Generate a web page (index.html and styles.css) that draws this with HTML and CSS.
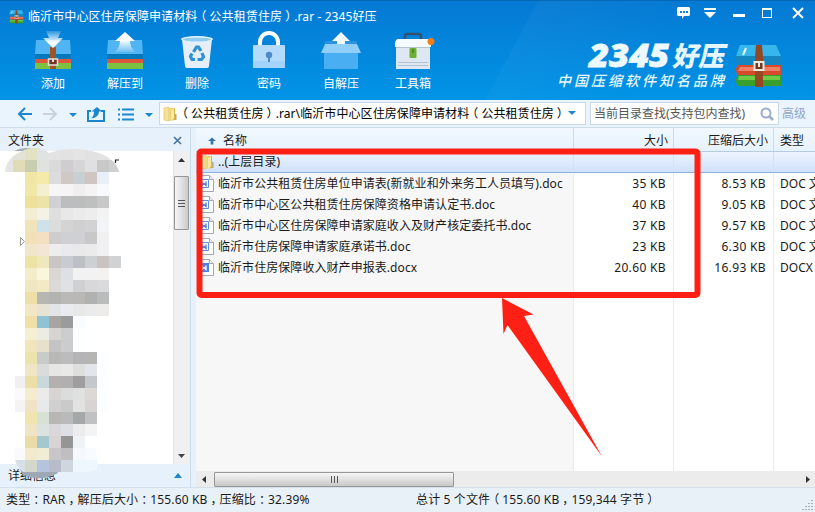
FILE: index.html
```html
<!DOCTYPE html>
<html lang="zh-CN">
<head>
    <meta charset="UTF-8">
    <meta name="viewport" content="width=device-width, initial-scale=1.0">
    <title>2345好压</title>
    <link rel="stylesheet" href="styles.css">
</head>
<body>
<div class="window">
    <header class="header">
        <div class="titlebar">
            <svg class="app-icon" width="15" height="14" viewBox="0 0 46 44">
                <use href="#archive"/>
            </svg>
            <span class="title">临沂市中心区住房保障申请材料<span class="open">（</span>公共租赁住房<span class="close">）</span>.rar - 2345好压</span>
            <svg class="controls" width="130" height="16" viewBox="0 0 130 16">
                <path d="M2 1h11l1 1v7l-1 1H8l-2 3v-3H2L1 9V2z" fill="#fff"/>
                <path d="M4 5h2v2H4zM7 5h2v2H7zM10 5h2v2h-2z" fill="#0f83d8"/>
                <path d="M28 2h12v2H28zM28 6h12l-6 6z" fill="#fff"/>
                <path d="M57 8h12v3H57z" fill="#fff"/>
                <path d="M86 2h10v10H86zM87 4v7h8V4z" fill="#fff" fill-rule="evenodd"/>
                <path d="M117 2l10 10M127 2l-10 10" stroke="#fff" stroke-width="2"/>
            </svg>
        </div>
        <div class="header-main">
            <nav class="tools">
                <div class="tool">
                    <svg width="44" height="42" viewBox="0 0 44 42">
                        <path d="M5 12h34l1 14H4z" fill="#51b4f3"/>
                        <path d="M4 26h36v6H4z" fill="#0878bd"/>
                        <path d="M4 31h36v4H4z" fill="#dc5639"/>
                        <path d="M4 35h36v6H4z" fill="#7dc143"/>
                        <path d="M19 19h6v22h-6z" fill="#9b5528"/>
                        <path d="M17.500 31h9v6h-9z" fill="#713725" stroke="#e9e2dc" stroke-width="1.500"/>
                        <path d="M21 31h2v3h-2z" fill="#e9e2dc"/>
                        <path d="M15 3h15l-3 7h5l-10 10-10-10h6z" fill="url(#arrowDown)"/>
                    </svg>
                    <span>添加</span>
                </div>
                <div class="tool">
                    <svg width="44" height="42" viewBox="0 0 44 42">
                        <path d="M5 12h34l1 14H4z" fill="#51b4f3"/>
                        <path d="M4 26h36v6H4z" fill="#0878bd"/>
                        <path d="M4 31h36v4H4z" fill="#dc5639"/>
                        <path d="M4 35h36v6H4z" fill="#7dc143"/>
                        <path d="M22 4l10 9h-5q0 6 5 11H12q5-5 5-11h-5z" fill="url(#arrowUp)"/>
                    </svg>
                    <span>解压到</span>
                </div>
                <div class="tool">
                    <svg width="44" height="42" viewBox="0 0 44 42">
                        <path d="M7 11h30l-3 27q0 2-3 2H13q-3 0-3-2z" fill="#e6eef7"/>
                        <ellipse cx="22" cy="11" rx="16" ry="3" fill="#eef8ff"/>
                        <ellipse cx="22" cy="11.500" rx="14" ry="2" fill="#8fcdf3"/>
                        <g fill="none" stroke="#2e91d6" stroke-width="3.200">
                            <path d="M18.500 24l3-5h2l2.500 4"/>
                            <path d="M27 25l1.500 4-2 2.500h-4"/>
                            <path d="M20 31.500h-3l-1.500-3 1.500-3"/>
                        </g>
                    </svg>
                    <span>删除</span>
                </div>
                <div class="tool">
                    <svg width="44" height="42" viewBox="0 0 44 42">
                        <path d="M13 18v-4a9 9 0 0 1 18 0v4" fill="none" stroke="#fff" stroke-width="4"/>
                        <rect x="6" y="17" width="32" height="23" rx="1" fill="#b4dbfc"/>
                        <path d="M6 33h32v7H6z" fill="#a3d2fa"/>
                        <circle cx="22" cy="27" r="3.200" fill="#4c8bcb"/>
                        <path d="M21 28h2v6h-2z" fill="#4c8bcb"/>
                    </svg>
                    <span>密码</span>
                </div>
                <div class="tool">
                    <svg width="44" height="42" viewBox="0 0 44 42">
                        <path d="M6 13h32v9H6z" fill="#2a93e0"/>
                        <path d="M22 4l9 9h-5v8h-8v-8h-5z" fill="#f2faff"/>
                        <path d="M6 16h32l4 9H2z" fill="#8fcffa"/>
                        <path d="M5 25h34v16H5z" fill="#4aaef2"/>
                    </svg>
                    <span>自解压</span>
                </div>
                <div class="tool">
                    <svg width="44" height="42" viewBox="0 0 44 42">
                        <path d="M14 12V8q0-2 2-2h12q2 0 2 2v4" fill="none" stroke="#34516f" stroke-width="2.500"/>
                        <path d="M7 11h30q2 0 3 4v4H4v-4q1-4 3-4z" fill="#f8fbfe"/>
                        <path d="M5 19h34v22H5z" fill="#dfe8f2"/>
                        <path d="M5 19.500h34M7 34.500h30M7 37.500h30" stroke="#b4c3d2"/>
                        <rect x="18.500" y="20" width="7" height="10" rx="1" fill="#6eb132"/>
                        <path d="M22 21v4" stroke="#2e6817"/>
                        <circle cx="40" cy="13.500" r="3.500" fill="#f57e12"/>
                    </svg>
                    <span>工具箱</span>
                </div>
            </nav>
            <div class="brand">
                <svg class="brand-text" width="176" height="60" viewBox="0 0 176 60">
                    <text class="brand-name" x="37" y="37" textLength="80" lengthAdjust="spacingAndGlyphs">2345</text>
                    <text class="brand-cn" transform="translate(120 36) skewX(-12)" textLength="52" lengthAdjust="spacingAndGlyphs">好压</text>
                    <text class="brand-slogan" x="5" y="56" textLength="167">中国压缩软件知名品牌</text>
                </svg>
                <svg class="brand-icon" width="46" height="44" viewBox="0 0 46 44">
                    <g id="archive">
                        <path d="M4 1h36l5 11v8l-2 1H2l-2-3v-6z" fill="#1686c0"/>
                        <path d="M4 1h36l5 11H0z" fill="#35b7ed"/>
                        <path d="M2 21h43v10H2q-4-5 0-10z" fill="#d84a2c"/>
                        <path d="M4 23h40v4H2z" fill="#f08065"/>
                        <path d="M2 31h43v11H2q-4-5 0-11z" fill="#389f2d"/>
                        <path d="M3 32h41v4H2z" fill="#6fcb43"/>
                        <path d="M20 1h6l1 12v30h-8V13z" fill="#934a24"/>
                        <path d="M10 4L7 11" stroke="#e5f8ff" stroke-width="2"/>
                        <rect x="18.500" y="18" width="9" height="8" fill="#753719" stroke="#f1e8df" stroke-width="2"/>
                        <path d="M22 17h2v6h-2z" fill="#f1e8df"/>
                    </g>
                </svg>
            </div>
        </div>
        <svg width="0" height="0" class="defs">
            <defs>
                <linearGradient id="arrowDown" x1="0" y1="0" x2="0" y2="1">
                    <stop offset="0" stop-color="#fff" stop-opacity=".15"/>
                    <stop offset=".7" stop-color="#fff"/>
                </linearGradient>
                <linearGradient id="arrowUp" x1="0" y1="0" x2="0" y2="1">
                    <stop offset=".4" stop-color="#fff"/>
                    <stop offset="1" stop-color="#fff" stop-opacity=".15"/>
                </linearGradient>
                <linearGradient id="folderFill">
                    <stop offset="0" stop-color="#f3dc85"/>
                    <stop offset="1" stop-color="#d8b045"/>
                </linearGradient>
            </defs>
        </svg>
    </header>

    <div class="navbar">
        <svg class="nav-icons" width="159" height="28" viewBox="0 0 159 28">
            <g fill="none" stroke="#1c86cf" stroke-width="2">
                <path d="M32 14H19M25 8l-6 6 6 6"/>
                <path d="M43 14h13M50 8l6 6-6 6" stroke="#cbd3da"/>
                <path d="M91 11h-3v10h16V11h-3"/>
                <path d="M118 9.500h2M118 14.500h2M118 19.500h2M122 9.500h12M122 14.500h12M122 19.500h12"/>
            </g>
            <path d="M69 13h8l-4 4zM145 13h8l-4 4z" fill="#1c86cf"/>
            <path d="M91 18.500q3-2 3-7h-2.500L97 7l5 4.500h-3q0 6-8 7z" fill="#1c86cf"/>
        </svg>
        <div class="address">
            <svg width="14" height="16" viewBox="0 0 14 16"><use href="#folder"/></svg>
            <span class="path"><span class="open">（</span>公共租赁住房<span class="close">）</span>.rar\临沂市中心区住房保障申请材料<span class="open">（</span>公共租赁住房<span class="close">）</span></span>
            <svg width="8" height="5" viewBox="0 0 8 5"><path d="M0 0h8L4 4z" fill="#1c86cf"/></svg>
        </div>
        <div class="search">
            <span>当前目录查找(支持包内查找)</span>
            <svg width="14" height="14" viewBox="0 0 14 14">
                <circle cx="6" cy="6" r="4.500" fill="none" stroke="#9aabd0" stroke-width="2"/>
                <path d="M9.500 9.500l3.500 3.500" stroke="#9aabd0" stroke-width="2.500"/>
            </svg>
        </div>
        <span class="advanced">高级</span>
    </div>

    <div class="content">
        <aside class="sidebar">
            <div class="sidebar-head">
                <span>文件夹</span>
                <svg width="9" height="9" viewBox="0 0 9 9"><path d="M1 1l7 7M8 1L1 8" stroke="#4d73a8" stroke-width="1.700"/></svg>
            </div>
            <div class="tree">
                <div class="tree-body"></div>
                <div class="vscroll">
                    <svg width="7" height="5" viewBox="0 0 7 5"><path d="M0 4h7L3.500 0z" fill="#333"/></svg>
                    <div class="vthumb"><i></i><i></i><i></i></div>
                    <svg width="7" height="5" viewBox="0 0 7 5"><path d="M0 0h7L3.500 4z" fill="#444"/></svg>
                </div>
            </div>
            <div class="details">
                <span>详细信息</span>
                <svg width="8" height="5" viewBox="0 0 8 5"><path d="M0 5h8L4 0z" fill="#1c86cf"/></svg>
            </div>
            <svg class="mosaic" id="mosaic" width="130" height="340" viewBox="0 145 130 340">
                <clipPath id="blob">
                    <path d="M5 172q1-16 22-23 14-3 22 4 24-8 50 0 18 7 20 19v13h4v285H92q-8 14-30 8-12 8-32-2-12-5-15-16V180z"/>
                </clipPath>
                <path d="M14 151q12-6 26 0z" fill="#a4abb1"/>
                <path d="M22 474q18 9 36-1l-2-4H20z" fill="#9daab5"/>
                <g id="cells" clip-path="url(#blob)"></g>
                <path d="M20.500 237.500v8l4-4z" fill="#fff" stroke="#999"/>
                <path d="M115.500 163v-3h3.500" fill="none" stroke="#222" stroke-width="1.200"/>
            </svg>
        </aside>

        <main class="list">
            <div class="row list-head">
                <div class="cell name">
                    <svg width="8" height="8" viewBox="0 0 9 8"><path d="M4.500 0L9 4H6v4H3V4H0z" fill="#3877a8"/></svg>
                    <span>名称</span>
                </div>
                <div class="cell num">大小</div>
                <div class="cell num">压缩后大小</div>
                <div class="cell">类型</div>
            </div>
            <div class="list-body">
                <div class="row selected">
                    <div class="cell name">
                        <svg width="14" height="16" viewBox="0 0 14 16">
                            <g id="folder">
                                <path d="M1 2l5-1v14l-5-1z" fill="#f5e29a" stroke="#d9bd5c" stroke-width=".6"/>
                                <path d="M6 2h6v12l-6 1z" fill="url(#folderFill)"/>
                                <path d="M8 4l3-2v10l-3 3z" fill="#f8e9a6"/>
                                <path d="M12 8h1.500v6H12z" fill="#b9ab7e"/>
                            </g>
                        </svg>
                        <span>..(上层目录)</span>
                    </div>
                    <div class="cell num"></div><div class="cell num"></div><div class="cell"></div>
                </div>
                <div class="row">
                    <div class="cell name">
                        <svg width="14" height="17" viewBox="0 0 14 17">
                            <g id="doc">
                                <path d="M.5.500h9l4 4v12H.5z" fill="#fff" stroke="#a2a8b3"/>
                                <path d="M9.500.500v4h4" fill="#eee" stroke="#a2a8b3"/>
                                <path d="M1 4.500h7.500v8H1" fill="#fff" stroke="#5d8de3"/>
                                <path d="M2 6.500v4l2-2 2 2v-4" fill="none" stroke="#3c73dc" stroke-width="1.300"/>
                            </g>
                        </svg>
                        <span>临沂市公共租赁住房单位申请表(新就业和外来务工人员填写).doc</span>
                    </div>
                    <div class="cell num">35 KB</div><div class="cell num">8.53 KB</div><div class="cell">DOC 文</div>
                </div>
                <div class="row">
                    <div class="cell name">
                        <svg width="14" height="17" viewBox="0 0 14 17"><use href="#doc"/></svg>
                        <span>临沂市中心区公共租赁住房保障资格申请认定书.doc</span>
                    </div>
                    <div class="cell num">40 KB</div><div class="cell num">9.05 KB</div><div class="cell">DOC 文</div>
                </div>
                <div class="row">
                    <div class="cell name">
                        <svg width="14" height="17" viewBox="0 0 14 17"><use href="#doc"/></svg>
                        <span>临沂市中心区住房保障申请家庭收入及财产核定委托书.doc</span>
                    </div>
                    <div class="cell num">37 KB</div><div class="cell num">9.57 KB</div><div class="cell">DOC 文</div>
                </div>
                <div class="row">
                    <div class="cell name">
                        <svg width="14" height="17" viewBox="0 0 14 17"><use href="#doc"/></svg>
                        <span>临沂市住房保障申请家庭承诺书.doc</span>
                    </div>
                    <div class="cell num">23 KB</div><div class="cell num">6.30 KB</div><div class="cell">DOC 文</div>
                </div>
                <div class="row">
                    <div class="cell name">
                        <svg width="14" height="17" viewBox="0 0 14 17">
                            <use href="#doc"/>
                            <path d="M0 4h9v9H0z" fill="#4a80e2"/>
                            <path d="M2 6.500v4l2-2 2 2v-4" fill="none" stroke="#fff" stroke-width="1.300"/>
                        </svg>
                        <span>临沂市住房保障收入财产申报表.docx</span>
                    </div>
                    <div class="cell num">20.60 KB</div><div class="cell num">16.93 KB</div><div class="cell">DOCX</div>
                </div>
                <div class="row filler">
                    <div class="cell"></div><div class="cell"></div><div class="cell"></div><div class="cell"></div>
                </div>
            </div>
            <div class="hscroll">
                <svg width="5" height="7" viewBox="0 0 5 7"><path d="M4 0v7L0 3.500z" fill="#333"/></svg>
                <div class="hthumb"><i></i><i></i><i></i></div>
                <svg width="5" height="7" viewBox="0 0 5 7"><path d="M1 0v7l4-3.500z" fill="#333"/></svg>
            </div>
        </main>
    </div>

    <footer class="status">
        <span class="status-left">类型<span class="close">：</span>RAR<span class="close">，</span>解压后大小<span class="close">：</span>155.60 KB<span class="close">，</span>压缩比<span class="close">：</span>32.39%</span>
        <span class="status-right">总计 5 个文件<span class="open">（</span>155.60 KB<span class="close">，</span>159,344 字节<span class="close">）</span></span>
        <svg class="grip" width="11" height="11" viewBox="0 0 11 11">
            <path d="M10 1v10M7 4v7M4 7v4M1 10v1" stroke="#929ca6" stroke-dasharray="1 2" stroke-width="1.500"/>
        </svg>
    </footer>

    <svg class="marks" width="815" height="512" viewBox="0 0 815 512">
        <rect x="199.500" y="151.500" width="498" height="143.500" rx="2" fill="none" stroke="#fe2014" stroke-width="6"/>
        <path d="M502 298l31.500 16.500-9.500 1.500 78 140.500L507.500 325l-4 9z" fill="#fe2014"/>
    </svg>
</div>

<script>
    // one line per 12px row from y=148: first column, then the cell colours
    const rows = [
        '0 e6e6e8 e3e4d8 e3e3c4 e0e3e4 e3e3e3 e2e2e2 e4e4e4 e2e2e2 e3e3e3 e8e8e8',
        '0 e6e6e6 e0dcb8 c9ceb0 e0e2e0 dadada cfcdd0 d6d6d6 e0e0e2 c8c8c8 d0d0d0',
        '2 f1e6a6 f4eba8 dcdcdc cfc8c4 c8d0d4 cfc6c2 e9eff9',
        '2 f1e7a6 f3efd0 f6f6f6 f5f5f5 f0eeee f4f4f4 f8f9fc',
        '2 ece09a ece3a8 cfd1d4 bbbdbe bcbebe bfbfbf c8c8c8',
        '2 f3edd4 f4f2e4 dededf e8e8e8 ebebeb ededed f3f3f3',
        '2 f0e4bc cfe2ec dcdcdc d4d4d4 d0d0d0 d2d2d4 f3f4f8',
        '2 f2e0b8 f4dfc0 cdcdcd ced0d4 d0d0d4 c8c8c8 f0f0f0',
        '2 f3e4cc f3e6d4 ededee eaeaee e9e9e9 ebebeb f0f0f2',
        '2 ece3a4 efe8bc c8c5c4 c8ccd0 bcc0c4 cdd0d2 c9c4c2 d0d2d4',
        '2 f3edcc faf6dc dad6d4 dde0e4 f2f2f2 f2f2f2 f4f2f0',
        '2 f0e6c0 f2eac4 dcdad8 dfe1e4 d0d0d2 d8d8da dadadc',
        '2 ecdfa8 b8b6b0 b3b3b1 b9b9b7 bab8b4 b0b2b2 babcbc',
        '2 f3e6c4 e6e2d4 e2e4e8 eaebee e8e8e8 ebebec edecea',
        '2 efe0a8 8fc2d4 a8a4a2 9a9c9c f8fbff',
        '2 f5efd4 ebece4 d8d4d4 cccece fbfdff',
        '2 f0e5bc e6e0cc c4c4c4 cbcdcd fbfdff',
        '2 ece4ac c8ccc8 b8b8b6 bcbcbc b4b4b6 b5b5b3 fbfdff',
        '2 f0e5c4 dadcdc e6e6e4 e9e9e9 dededc e2e6ea fbfdff',
        '1 f0f0f2 ecdfa6 c9d8dc b4b0ae b0b0b0 9f9d9d c4c8ca fbfdff',
        '1 fafafa f5ecd0 ebebeb d8d4d4 dcdcdc dfe0e0 dcd8d4 fbfdff',
        '1 f4f4f4 f0e2c4 e8e9ea d0d0d0 cacaca e2e2e2 d8d4d4 fbfdff',
        '2 f0e4b0 d8e2d4 b9b7b5 bababa a5a8a8 c0c2c2',
        '2 efe4c4 dce2e0 d9d7d9 dedfe4 ececec f4f4f4',
        '2 e9dca8 a5c8d0 d8d4d4 959595 f0f3f6',
        '1 fafafa f1eacc f1ecd4 c8c6c8 c0bec0 f5f8fc f8fbff',
        '1 d8dfe6 d2d8cc b4c4dc b8bcc8 d0d6e0 eef6fe eef6fe'
    ];
    let cells = '';
    rows.forEach((row, r) => {
        const [start, ...colors] = row.split(' ');
        colors.forEach((c, i) => {
            const x = 1 + (Number(start) + i) * 12;
            cells += `<rect x="${x}" y="${148 + r * 12}" width="12" height="12" fill="#${c}"/>`;
        });
    });
    document.getElementById('cells').innerHTML = cells;
</script>
</body>
</html>
```
FILE: styles.css
```css
* {
    box-sizing: border-box;
}

body {
    margin: 0;
    font-family: "Noto Sans", "Noto Sans CJK SC", sans-serif;
    font-size: 12px;
    line-height: 16px;
    color: #1a1a1a;
    overflow: hidden;
}

svg {
    display: block;
    flex: none;
}

.window {
    position: relative;
    width: 815px;
    height: 512px;
    display: flex;
    flex-direction: column;
    overflow: hidden;
    white-space: nowrap;
}

/* full-width punctuation sits in the middle of its square */
.open {
    margin: 0 3px 0 -3px;
}

.close {
    margin: 0 -3px 0 3px;
}

/* header */
.header {
    height: 100px;
    flex: none;
    border-top: 1px solid #0669b5;
    background: linear-gradient(118deg, transparent 62%, rgba(255, 255, 255, .03) 62%, transparent 80%), linear-gradient(#0579d3, #0194e6);
    color: #fff;
}

.titlebar {
    height: 29px;
    display: flex;
    align-items: center;
    padding: 2px 9px 0 9px;
}

.title {
    margin-left: 4px;
    flex: 1;
    letter-spacing: .1px;
}

.controls {
    margin-top: -6px;
}

.header-main {
    display: flex;
    justify-content: space-between;
}

.tools {
    display: flex;
    padding-left: 17px;
}

.tool {
    width: 72px;
    display: flex;
    flex-direction: column;
    align-items: center;
    gap: 6px;
    margin-top: -2px;
}

.brand {
    display: flex;
    padding-right: 33px;
}

.brand-text {
    overflow: visible;
}

.brand-icon {
    margin: 14px 0 0 8px;
}

.brand-name {
    font: italic 900 31px "Noto Sans", sans-serif;
    fill: #eef9ff;
    stroke: #eef9ff;
    stroke-width: .8px;
}

.brand-cn {
    font: 900 27px "Noto Sans CJK SC", sans-serif;
    fill: #e6f6ff;
}

.brand-slogan {
    font: italic 500 14px "Noto Sans CJK SC", sans-serif;
    fill: #e9f7ff;
}

.defs {
    height: 0;
}

/* address bar */
.navbar {
    height: 28px;
    flex: none;
    display: flex;
    align-items: center;
    background: #e9f4fd;
    border-bottom: 1px solid #cfdce9;
}

.address,
.search {
    height: 23px;
    display: flex;
    align-items: center;
    background: #fff;
    border: 1px solid #c8d8e8;
}

.address {
    width: 427px;
    padding: 0 9px 0 3px;
}

.path {
    flex: 1;
    margin-left: 2px;
    color: #000;
    letter-spacing: .08px;
}

.search {
    width: 189px;
    margin-left: 4px;
    padding: 0 4px 0 3px;
    justify-content: space-between;
    color: #555;
}

.advanced {
    margin-left: 3px;
    color: #8fa5cc;
}

/* folder panel */
.content {
    height: 359px;
    flex: none;
    display: flex;
    background: #e7f1fb;
}

.sidebar {
    position: relative;
    width: 191px;
    display: flex;
    flex-direction: column;
    border-right: 1px solid #cddceb;
}

.sidebar-head {
    height: 23px;
    display: flex;
    align-items: center;
    justify-content: space-between;
    padding: 2px 8px 0;
}

.tree {
    height: 313px;
    display: flex;
    background: #fff;
    margin-right: 1px;
}

.tree-body {
    flex: 1;
}

.vscroll {
    width: 16px;
    display: flex;
    flex-direction: column;
    align-items: center;
    padding: 7px 0 5px;
    background: #f0f0f0;
    border-left: 1px solid #e2e2e2;
}

.vscroll svg:last-child {
    margin-top: auto;
}

.vthumb {
    width: 15px;
    height: 54px;
    margin-top: 13px;
    display: flex;
    flex-direction: column;
    justify-content: center;
    align-items: center;
    gap: 2px;
    border: 1px solid #979797;
    border-radius: 1px;
    background: linear-gradient(90deg, #f6f6f6, #e4e4e4 45%, #c9c9c9);
}

.vthumb i {
    width: 7px;
    height: 1px;
    background: #555;
}

.details {
    flex: 1;
    display: flex;
    align-items: center;
    justify-content: space-between;
    padding: 0 8px;
}

.mosaic {
    position: absolute;
    left: 0;
    top: 17px;
}

/* file list */
.list {
    width: 619px;
    margin-left: 5px;
    flex: none;
    display: flex;
    flex-direction: column;
    background: #fff;
}

.row {
    display: grid;
    grid-template-columns: 378px 100px 100px 41px;
    height: 21px;
    flex: none;
}

.cell {
    padding-left: 6px;
    display: flex;
    align-items: center;
    overflow: hidden;
    border-right: 1px solid #e4ecf2;
}

.cell:last-child {
    border-right: 0;
}

.name {
    padding-left: 4px;
    gap: 4px;
    background: #f7f7f7;
    letter-spacing: .06px;
}

.num {
    padding: 0 7px 0 0;
    justify-content: flex-end;
    letter-spacing: .35px;
}

.list-head {
    height: 24px;
    background: linear-gradient(#f2f8fe, #e6f2fd);
    border-bottom: 1px solid #b7cbe0;
}

.list-head .cell {
    border-color: #ccdbe9;
    padding-top: 2px;
}

.list-head .name {
    background: none;
    padding-left: 12px;
    gap: 7px;
}

.list-head .num {
    padding-right: 5px;
    letter-spacing: 0;
}

.list-body {
    flex: 1;
    display: flex;
    flex-direction: column;
}

.selected {
    background: linear-gradient(#edf4fe, #cfe1fa);
    border-bottom: 1px solid #8eb0dd;
}

.selected .cell {
    background: none;
    border-color: #d3e2f5;
}

.filler {
    height: auto;
    flex: 1;
}

.filler .cell:first-child {
    background: #f7f7f7;
}

.hscroll {
    height: 16px;
    display: flex;
    align-items: center;
    padding: 0 5px 0 6px;
    background: #ececec;
}

.hscroll svg:last-child {
    margin-left: auto;
}

.hthumb {
    width: 240px;
    height: 15px;
    margin-left: 7px;
    display: flex;
    justify-content: center;
    align-items: center;
    gap: 2px;
    border: 1px solid #979797;
    border-radius: 1px;
    background: linear-gradient(#f6f6f6, #e2e2e2 45%, #c8c8c8);
}

.hthumb i {
    width: 1px;
    height: 7px;
    background: #555;
}

/* status bar */
.status {
    flex: 1;
    display: flex;
    align-items: center;
    padding: 0 2px 0 6px;
    background: #e9f1f8;
    border-top: 1px solid #d3e0ec;
}

.status-left {
    width: 410px;
    letter-spacing: .13px;
}

.status-right {
    flex: 1;
    letter-spacing: .13px;
}

.grip {
    align-self: flex-end;
    margin-bottom: 2px;
}

/* red frame and arrow over the list */
.marks {
    position: absolute;
    left: 0;
    top: 0;
}
```
